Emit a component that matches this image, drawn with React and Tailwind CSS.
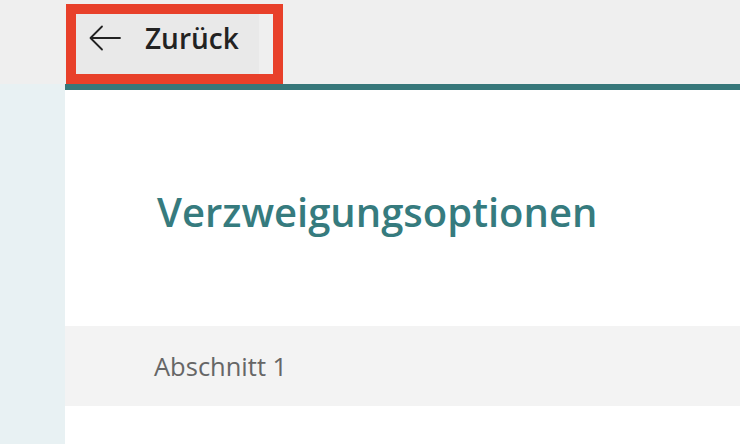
export default function App() {
  return (
    <div
      className="w-[740px] h-[444px] overflow-hidden flex flex-col bg-white"
      style={{ fontFamily: '"Open Sans", "Noto Sans", sans-serif' }}
    >
      <header className="h-[84px] shrink-0 bg-[#efefef] pl-[66px] pt-[4px]">
        <div className="w-[217px] h-[80px] border-[10px] border-[#e8402a] flex">
          <button className="w-[183px] h-full bg-[#e9e9e9] flex items-center pl-[13px] pb-[12px] gap-[24px] text-[#222]">
            <svg width="32" height="26" viewBox="0 0 32 26" fill="none">
              <path
                d="M31 13H2M13 1.5L1.5 13L13 24.5"
                stroke="#222"
                strokeWidth="1.8"
                strokeLinecap="round"
                strokeLinejoin="round"
              />
            </svg>
            <span className="text-[28px] font-semibold leading-none">Zurück</span>
          </button>
        </div>
      </header>
      <div className="flex flex-1 min-h-0">
        <aside className="w-[65px] shrink-0 bg-[#e8f1f3]" />
        <main className="flex-1 flex flex-col">
          <div className="h-[6px] bg-[#37777a]" />
          <div className="h-[236px] flex items-center pl-[92px] pt-[8px]">
            <h1 className="text-[40px] font-semibold text-[#367b7e]">Verzweigungsoptionen</h1>
          </div>
          <div className="h-[80px] bg-[#f3f3f3] flex items-center pl-[89px]">
            <span className="text-[25.5px] text-[#666]">Abschnitt 1</span>
          </div>
          <div className="flex-1" />
        </main>
      </div>
    </div>
  );
}
